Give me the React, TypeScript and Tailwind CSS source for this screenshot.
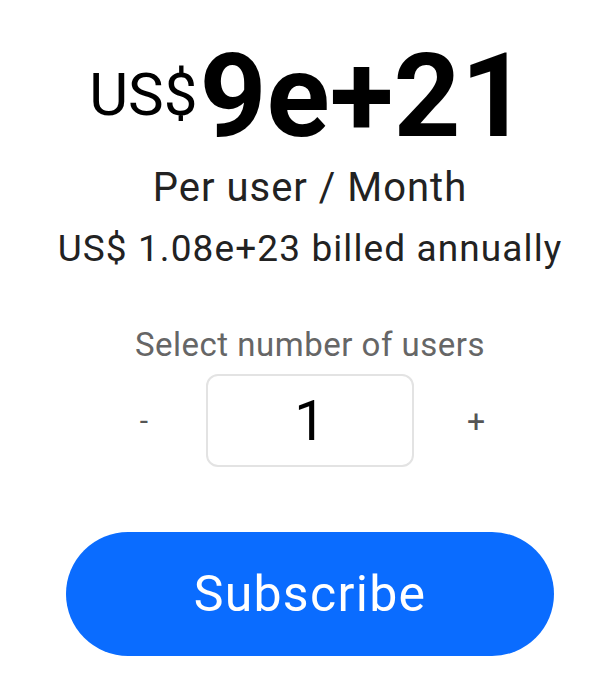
import { useState } from 'react';

export default function App() {
  const [users, setUsers] = useState(1);

  return (
    <div className="min-h-screen bg-white flex flex-col items-center pl-[10px] font-['Roboto',sans-serif]">
      {/* Price */}
      <div className="mt-[38px] mr-[3px] flex items-center text-black">
        <span className="text-[60px] leading-none mr-[2px] -mt-[3px]">US$</span>
        <span className="text-[117px] leading-none font-bold">9e+21</span>
      </div>

      <p className="mt-[9px] text-[40px] leading-[48px] tracking-[1px] text-[#222]">Per user / Month</p>
      <p className="mt-[15px] text-[37px] leading-[44px] tracking-[1.1px] text-[#222]">US$ 1.08e+23 billed annually</p>

      {/* Quantity */}
      <p className="mt-[54px] text-[33px] leading-[40px] tracking-[0.5px] text-[#666]">Select number of users</p>
      <div className="mt-[9px] flex items-center">
        <button
          className="w-[60px] text-[30px] text-[#555] text-center"
          onClick={() => setUsers(Math.max(1, users - 1))}
        >
          -
        </button>
        <div className="mx-[32px] w-[208px] h-[93px] border-2 border-[#e3e3e3] rounded-[12px] flex items-center justify-center text-[56px] text-black">
          {users}
        </div>
        <button
          className="w-[60px] text-[32px] text-[#555] text-center"
          onClick={() => setUsers(users + 1)}
        >
          +
        </button>
      </div>

      <button className="mt-[65px] w-[488px] h-[124px] rounded-full bg-[#0a6cff] text-white text-[50px] tracking-[1.3px]">
        Subscribe
      </button>
    </div>
  );
}
